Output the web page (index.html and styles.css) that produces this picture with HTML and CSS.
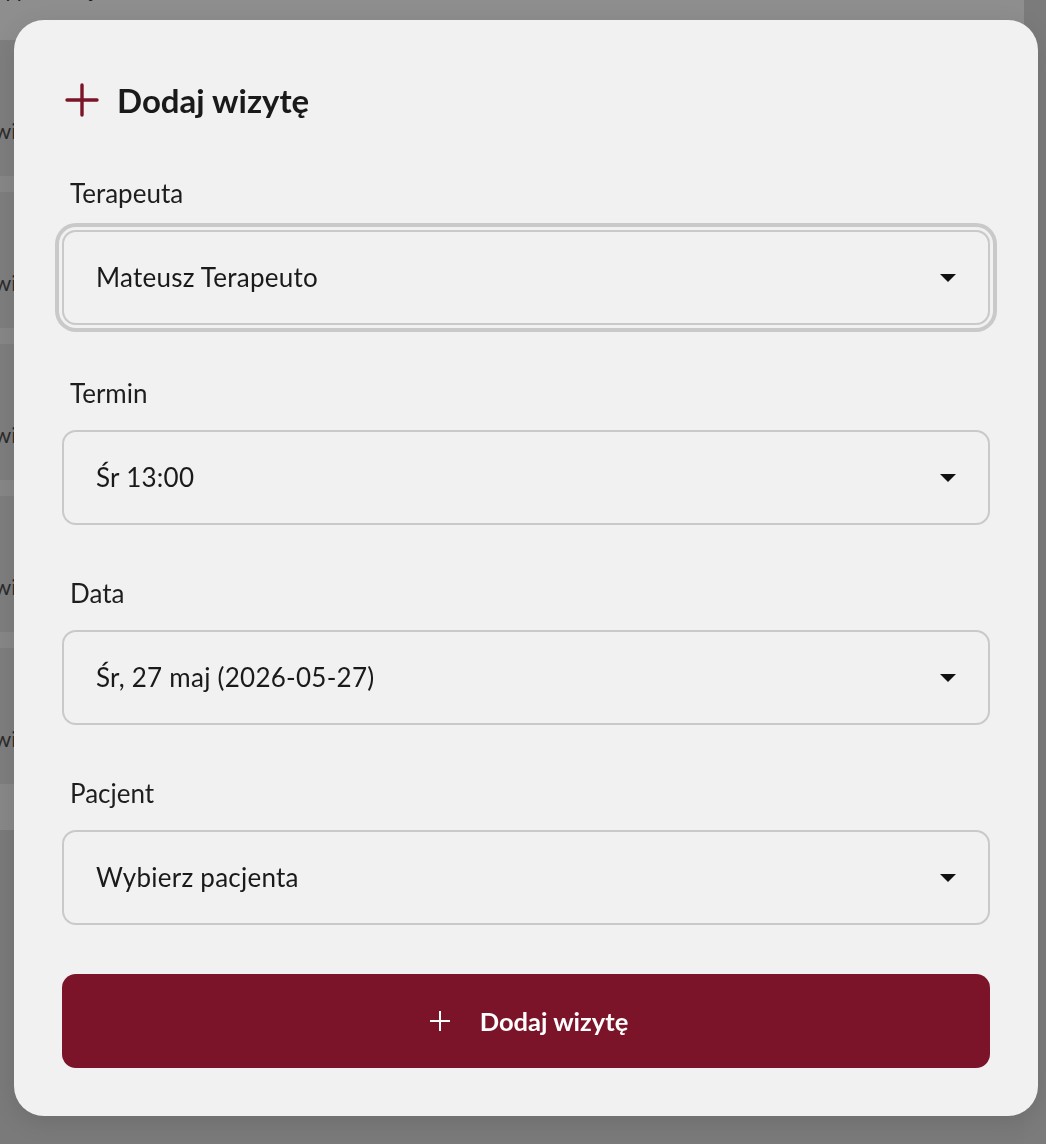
FILE: index.html
```html
<!DOCTYPE html>
<html lang="pl">
<head>
<meta charset="utf-8">
<title>Dodaj wizytę</title>
<link rel="stylesheet" href="styles.css">
</head>
<body>
<div class="page">
  <div class="page-main">
    <div class="page-head">yy, dzisiaj</div>
    <div class="slot-list">
      <div class="slot"><span class="slot-text">wizyta</span></div>
      <div class="slot"><span class="slot-text">wizyta</span></div>
      <div class="slot"><span class="slot-text">wizyta</span></div>
      <div class="slot"><span class="slot-text">wizyta</span></div>
      <div class="slot"><span class="slot-text">wizyta</span></div>
    </div>
    <div class="page-spacer"></div>
    <div class="page-foot"></div>
  </div>
  <div class="scroll-track"></div>
</div>

<div class="overlay">
  <div class="modal">
    <div class="modal-header">
      <svg class="title-icon" width="40" height="40" viewBox="0 0 40 40" aria-hidden="true">
        <path d="M20 5 V35 M5 20 H35" stroke="#7b1329" stroke-width="3.4" stroke-linecap="round" fill="none"/>
      </svg>
      <h1 class="modal-title">Dodaj wizytę</h1>
    </div>

    <div class="field field-first">
      <div class="field-label">Terapeuta</div>
      <div class="select select-focused">
        <span class="select-value">Mateusz Terapeuto</span>
        <span class="select-arrow"></span>
      </div>
    </div>

    <div class="field">
      <div class="field-label">Termin</div>
      <div class="select">
        <span class="select-value">Śr 13:00</span>
        <span class="select-arrow"></span>
      </div>
    </div>

    <div class="field">
      <div class="field-label">Data</div>
      <div class="select">
        <span class="select-value">Śr, 27 maj (2026-05-27)</span>
        <span class="select-arrow"></span>
      </div>
    </div>

    <div class="field">
      <div class="field-label">Pacjent</div>
      <div class="select">
        <span class="select-value">Wybierz pacjenta</span>
        <span class="select-arrow"></span>
      </div>
    </div>

    <button class="submit-btn" type="button">
      <svg class="btn-icon" width="24" height="24" viewBox="0 0 24 24" aria-hidden="true">
        <path d="M12 2 V22 M2 12 H22" stroke="#ffffff" stroke-width="2" fill="none"/>
      </svg>
      <span class="btn-label">Dodaj wizytę</span>
    </button>
  </div>
</div>
</body>
</html>
```

FILE: styles.css
```css
html, body {
  margin: 0;
  padding: 0;
  height: 100%;
}

body {
  background: #8d8d8d;
  font-family: Lato, "Noto Sans", "Liberation Sans", sans-serif;
  overflow: hidden;
}

/* ---------- dimmed page behind the dialog ---------- */
.page {
  display: flex;
  height: 1144px;
}

.page-main {
  flex: 1;
  display: flex;
  flex-direction: column;
  background: #8e8e8e;
}

.page-head {
  height: 64px;
  margin-top: -24px;
  padding-left: 4px;
  font-size: 22px;
  color: #1b1b1b;
  line-height: 26px;
  box-sizing: border-box;
}

.slot-list {
  display: flex;
  flex-direction: column;
  gap: 16px;
  background: #878787;
}

.slot {
  height: 136px;
  background: #7e7e7e;
  display: flex;
  align-items: flex-end;
  padding-bottom: 32px;
  box-sizing: border-box;
}

.slot-text {
  font-size: 22px;
  color: #2c2c2c;
  text-indent: -6px;
  display: block;
}

.page-spacer {
  height: 46px;
  background: #888888;
}

.page-foot {
  flex: 1;
  background: #7a7a7a;
}

.scroll-track {
  width: 22px;
  background: #7b7b7b;
}

/* ---------- overlay + dialog ---------- */
.overlay {
  position: fixed;
  inset: 0;
  padding: 20px 0 0 14px;
  box-sizing: border-box;
}

.modal {
  width: 1024px;
  height: 1096px;
  box-sizing: border-box;
  padding: 48px;
  background: #f1f1f1;
  border-radius: 30px;
  box-shadow: 0 6px 24px rgba(0, 0, 0, 0.1);
  display: flex;
  flex-direction: column;
  color: #1c1c1c;
}

.modal-header {
  height: 64px;
  display: flex;
  align-items: center;
  gap: 15px;
}

.title-icon {
  display: block;
  flex: none;
}

.modal-title {
  margin: 0;
  font-size: 33px;
  font-weight: 700;
  line-height: 40px;
  color: #1a1a1a;
}

.field {
  display: flex;
  flex-direction: column;
  margin-top: 53px;
}

.field-first {
  margin-top: 46px;
}

.field-label {
  font-size: 26px;
  line-height: 30px;
  color: #1e1e1e;
  padding-left: 8px;
  margin-bottom: 22px;
}

.select {
  height: 95px;
  box-sizing: border-box;
  border: 2px solid #c9c9c9;
  border-radius: 14px;
  padding: 0 32px;
  display: flex;
  align-items: center;
  justify-content: space-between;
}

.select-focused {
  box-shadow: 0 0 0 3px #f1f1f1, 0 0 0 7px #c9c9c9;
}

.select-value {
  font-size: 26px;
  letter-spacing: 0.25px;
  color: #1a1a1a;
}

.select-arrow {
  width: 0;
  height: 0;
  border-left: 8px solid transparent;
  border-right: 8px solid transparent;
  border-top: 8px solid #111111;
  margin-top: 2px;
}

.submit-btn {
  margin-top: 49px;
  height: 95px;
  border: none;
  border-radius: 14px;
  background: #7b1329;
  color: #ffffff;
  display: flex;
  align-items: center;
  justify-content: center;
  gap: 28px;
  font-family: inherit;
  cursor: pointer;
  padding: 0 0 0 4px;
}

.btn-icon {
  display: block;
  flex: none;
}

.btn-label {
  font-size: 25.5px;
  font-weight: 700;
}
```
